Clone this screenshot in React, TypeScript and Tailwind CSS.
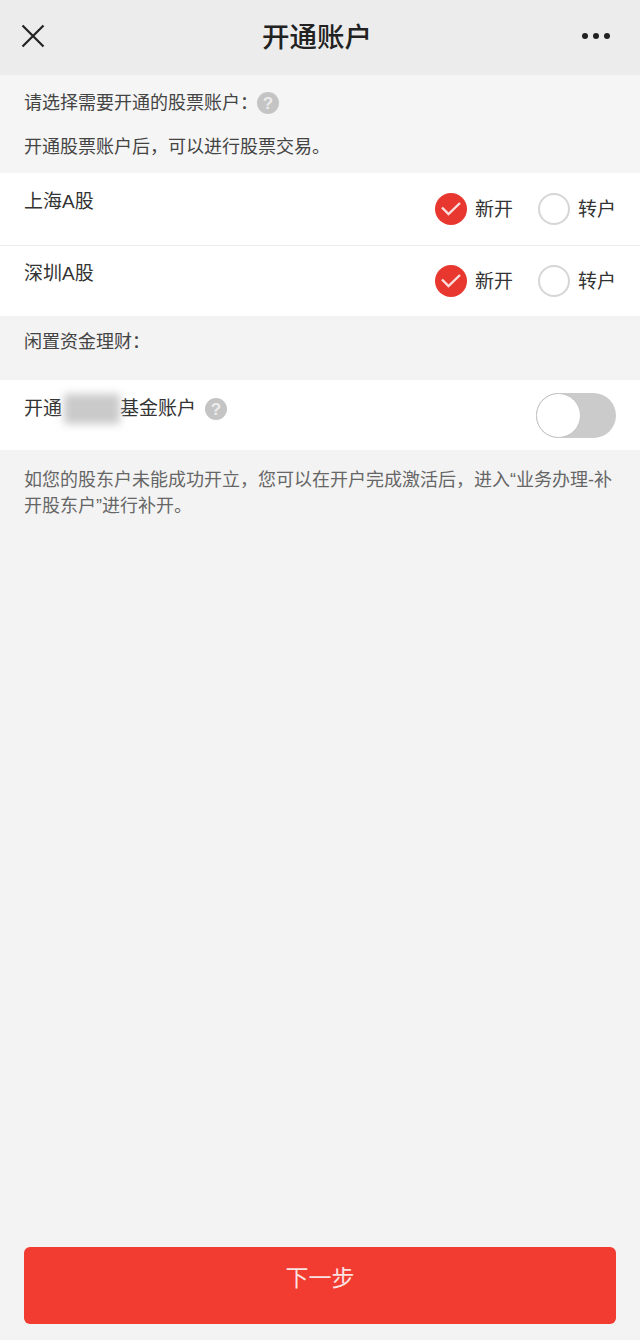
const fontCjk = "font-['Liberation_Sans','Noto_Sans_CJK_SC',sans-serif]"

function HelpDot({ className = "" }: { className?: string }) {
  return (
    <span className={`flex h-[22px] w-[22px] shrink-0 items-center justify-center rounded-full bg-[#c4c4c4] text-[17px] font-bold leading-none text-[#ececec] ${className}`}>
      ?
    </span>
  )
}

function Radio({ label, checked = false }: { label: string; checked?: boolean }) {
  return (
    <div className="flex items-center gap-[8px]">
      {checked ? (
        <span className="flex h-8 w-8 items-center justify-center rounded-full bg-[#e8372f]">
          <svg width="32" height="32" viewBox="0 0 32 32" fill="none">
            <path d="M7 14.5 L13.5 21 L25 10" stroke="#f8dedc" strokeWidth="2.4" />
          </svg>
        </span>
      ) : (
        <span className="h-8 w-8 rounded-full border-2 border-[#d6d6d6] bg-white" />
      )}
      <span className="text-[19px] leading-none text-[#333]">{label}</span>
    </div>
  )
}

function AccountRow({ name, last = false }: { name: string; last?: boolean }) {
  return (
    <div className={`flex items-start justify-between bg-white pl-6 pr-[24px] ${last ? "h-[70px]" : "h-[73px] border-b border-[#ececec]"}`}>
      <span className={`text-[19px] leading-[26px] text-[#333] ${last ? "mt-[15px]" : "mt-[16px]"}`}>{name}</span>
      <div className={`flex gap-[25px] ${last ? "mt-[19px]" : "mt-[20px]"}`}>
        <Radio label="新开" checked />
        <Radio label="转户" />
      </div>
    </div>
  )
}

export default function App() {
  return (
    <div className={`flex h-[1340px] w-[640px] flex-col bg-[#f3f3f3] ${fontCjk}`}>
      {/* header */}
      <header className="flex h-[75px] shrink-0 items-center justify-between bg-[#ececec] pl-[21px] pr-[30px]">
        <svg width="24" height="24" viewBox="0 0 24 24" fill="none" className="mb-[4px]">
          <path d="M1.5 1.5 L22.5 22.5 M22.5 1.5 L1.5 22.5" stroke="#222" strokeWidth="2.2" />
        </svg>
        <h1 className="ml-[7px] text-[27.5px] font-medium leading-none text-[#222]">开通账户</h1>
        <div className="mb-[3px] flex gap-[5px]">
          <span className="h-[6px] w-[6px] rounded-full bg-[#222]" />
          <span className="h-[6px] w-[6px] rounded-full bg-[#222]" />
          <span className="h-[6px] w-[6px] rounded-full bg-[#222]" />
        </div>
      </header>

      {/* intro */}
      <div className="h-[98px] shrink-0 bg-[#f5f5f5] px-6 pt-[15px] text-[18px] leading-[26px] text-[#444]">
        <div className="flex items-center gap-[11px]">
          <span>请选择需要开通的股票账户：</span>
          <HelpDot className="-ml-[12px]" />
        </div>
        <p className="mt-[18px]">开通股票账户后，可以进行股票交易。</p>
      </div>

      <AccountRow name="上海A股" />
      <AccountRow name="深圳A股" last />

      <div className="h-[64px] shrink-0 px-6 pt-[13px] text-[18px] leading-[26px] text-[#444]">闲置资金理财：</div>

      {/* fund account */}
      <div className="flex h-[70px] shrink-0 items-start justify-between bg-white pl-6 pr-6">
        <div className="mt-[14px] flex items-center text-[19px] leading-[26px] text-[#333]">
          <span>开通</span>
          <span className="ml-[2px] h-[30px] w-[56px] bg-[#cacaca] blur-[4px]" />
          <span>基金账户</span>
          <HelpDot className="ml-[9px]" />
        </div>
        <div className="mt-[13px] flex h-[45px] w-[80px] items-center rounded-full bg-[#cbcbcb]">
          <span className="h-[45px] w-[45px] rounded-full border border-[#c4c4c4] bg-white" />
        </div>
      </div>

      <p className="px-6 pt-[17px] text-[18px] leading-[26px] text-[#666]">
        如您的股东户未能成功开立，您可以在开户完成激活后，进入“业务办理-补开股东户”进行补开。
      </p>

      {/* next step */}
      <div className="mt-auto px-6 pb-[16px]">
        <button className="h-[77px] w-full rounded-[6px] bg-[#f23c31] pb-[15px] text-[23px] text-[#fbe3e1]">下一步</button>
      </div>
    </div>
  )
}
